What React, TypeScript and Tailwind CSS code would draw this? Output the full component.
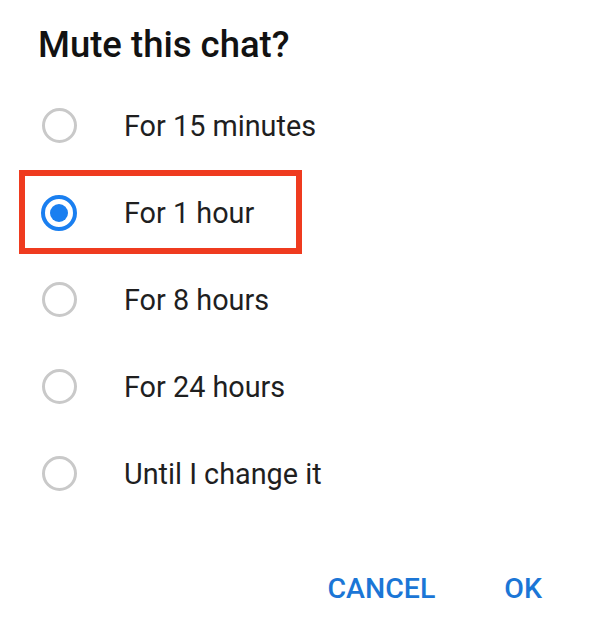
import React, { useState } from 'react';

const options = [
  'For 15 minutes',
  'For 1 hour',
  'For 8 hours',
  'For 24 hours',
  'Until I change it',
];

const Radio = ({ checked }: { checked: boolean }) =>
  checked ? (
    <div className="flex h-[36px] w-[36px] items-center justify-center rounded-full border-[4px] border-[#1a7ff0]">
      <div className="h-[18px] w-[18px] rounded-full bg-[#1a7ff0]" />
    </div>
  ) : (
    <div className="h-[35px] w-[35px] rounded-full border-[3px] border-[#c9c9c9]" />
  );

export default function App() {
  const [selected, setSelected] = useState(1);

  return (
    <div
      className="h-[627px] w-[592px] overflow-hidden bg-white"
      style={{ fontFamily: 'Roboto, "Noto Sans", sans-serif' }}
    >
      <h1 className="pl-[38px] pt-[23px] text-[36.5px] font-medium leading-[44px] text-[#121212]">
        Mute this chat?
      </h1>

      <div className="mt-[15px] flex flex-col">
        {options.map((label, i) => (
          <button
            key={label}
            onClick={() => setSelected(i)}
            className="relative flex h-[87px] items-center text-left"
          >
            <div className="flex w-[117px] justify-center pl-[1px]">
              <Radio checked={selected === i} />
            </div>
            <span className="pl-[7px] text-[28.8px] leading-[34px] text-[#1f1f1f]">{label}</span>
            {i === 1 && (
              <div className="absolute left-[19px] top-[1px] h-[84px] w-[283px] border-[6px] border-[#ef3b1f]" />
            )}
          </button>
        ))}
      </div>

      <div className="mt-[55px] flex justify-end gap-[69px] pr-[50px]">
        <button className="text-[28.5px] font-medium leading-[34px] text-[#1b76d6]">CANCEL</button>
        <button className="text-[28.5px] font-medium leading-[34px] text-[#1b76d6]">OK</button>
      </div>
    </div>
  );
}
